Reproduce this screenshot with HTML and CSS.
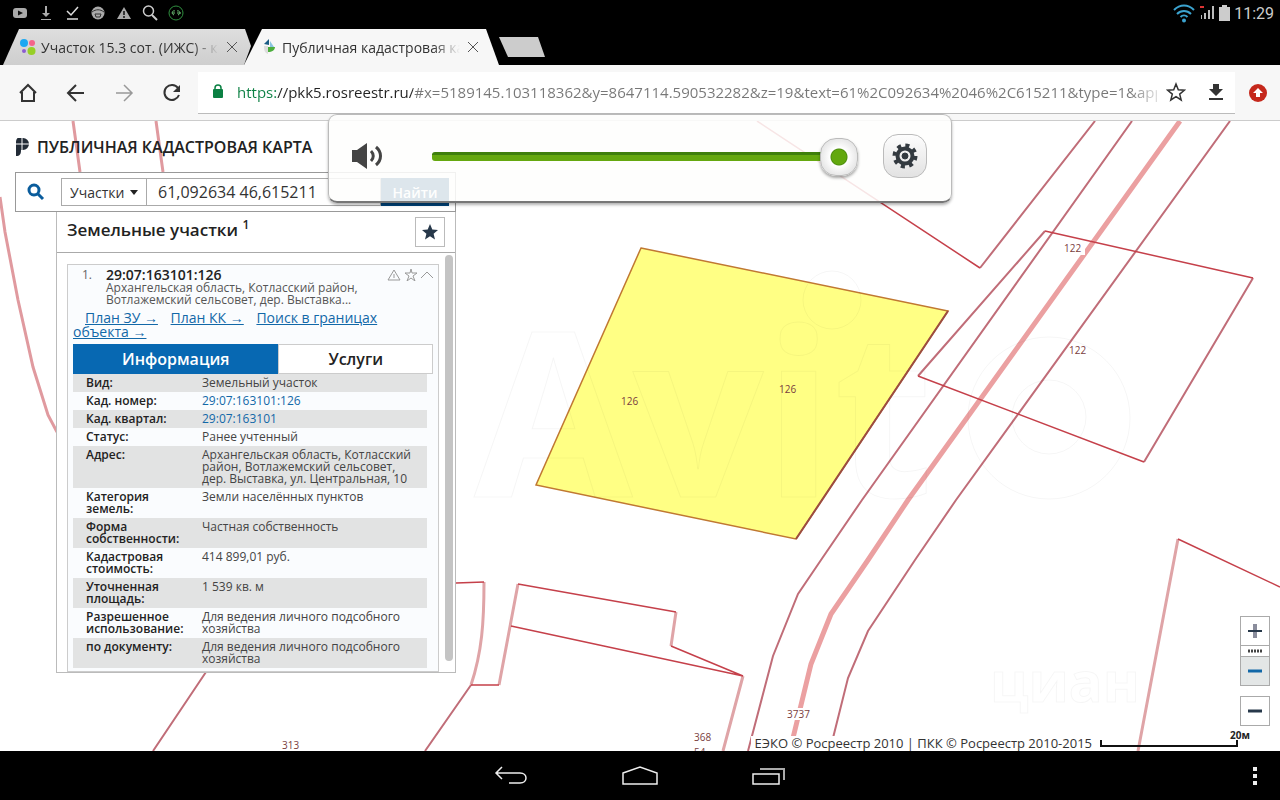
FILE: index.html
```
<!DOCTYPE html>
<html lang="ru">
<head>
    <meta charset="UTF-8">
    <meta name="viewport" content="width=device-width, initial-scale=1.0">
    <title>Публичная кадастровая карта</title>
    <link rel="stylesheet" href="styles.css">
</head>
<body>
<!-- Android status bar -->
<div class="status-bar">
    <div class="status-icons">
        <svg width="16" height="16" viewBox="0 0 16 16"><rect x="1" y="3" width="14" height="10" rx="3" fill="#aaa"/><path d="M6 5.500l5 2.500-5 2.500z" fill="#111"/></svg>
        <svg width="16" height="16" viewBox="0 0 16 16" fill="#aaa"><path d="M7 1h2v7h3l-4 4-4-4h3zM3 14h10v1H3z"/></svg>
        <svg width="16" height="16" viewBox="0 0 16 16" fill="none" stroke="#ddd" stroke-width="1.500"><path d="M3 6l4 4 7-8M3 14h11"/></svg>
        <svg width="16" height="16" viewBox="0 0 16 16"><circle cx="8" cy="8" r="6.500" fill="#aaa"/><path d="M2 7c4-3 8-3 12 0M5 9h6l-1 3H6z" fill="none" stroke="#333"/></svg>
        <svg width="16" height="16" viewBox="0 0 16 16"><path d="M8 2l7 12H1z" fill="#aaa"/><path d="M8 6v4M8 11v2" stroke="#111" stroke-width="1.500"/></svg>
        <svg width="16" height="16" viewBox="0 0 16 16" fill="none" stroke="#ccc" stroke-width="1.500"><circle cx="6.500" cy="6" r="5"/><path d="M10 10l5 5" stroke-width="2"/></svg>
        <svg width="16" height="16" viewBox="0 0 16 16" fill="none" stroke="#2f8f3f"><circle cx="8" cy="8" r="7"/><path d="M7 6c-3-1-4 3-1 4M4 8h3M9 6c3-1 4 3 1 4M9 8h4" stroke="#6cbf74"/></svg>
    </div>
    <div class="status-right">
        <svg width="22" height="20" viewBox="0 0 22 20" fill="none" stroke="#3ba3cf" stroke-width="2"><path d="M1 7c6-6 14-6 20 0M4 11c4-4 10-4 14 0M7.500 14c2-2 5-2 7 0"/><circle cx="11" cy="17.500" r="1" fill="#3ba3cf"/></svg>
        <svg width="16" height="16" viewBox="0 0 16 16" fill="#bbb"><path d="M1 1h4v2H1z" fill="#d33"/><path d="M2 10h1v4H2zM5 8h2v6H5zM9 5h2v9H9zM13 1h2v13h-2z"/></svg>
        <svg width="11" height="16" viewBox="0 0 11 16" fill="#ccc"><path d="M3 0h5v2h3v14H0V2h3z"/></svg>
        <span class="clock">11:29</span>
    </div>
</div>

<!-- Browser tabs -->
<div class="tab-strip">
    <div class="tab tab-first">
        <svg width="18" height="18" viewBox="0 0 18 18"><circle cx="5" cy="5" r="4" fill="#1aa8f2"/><circle cx="13" cy="5" r="3" fill="#f4658a"/><circle cx="5" cy="13" r="2" fill="#8b5cd0"/><circle cx="12.500" cy="13" r="4" fill="#97cf26"/></svg>
        <span class="tab-title">Участок 15.3 сот. (ИЖС) - к</span>
        <button class="tab-close" aria-label="Закрыть"><svg width="12" height="12" viewBox="0 0 12 12" stroke="#555"><path d="M1 1l10 10M11 1L1 11"/></svg></button>
    </div>
    <div class="tab tab-active">
        <svg width="18" height="18" viewBox="0 0 18 18"><path d="M4 6l5-5v6z" fill="#1b5d86"/><path d="M10 3l4 6h-4z" fill="#8bc5df"/><path d="M8 9h7c0 3-3 5-7 5z" fill="#4cae3d"/><path d="M4 8h4v8c-3-1-4-3-4-8z" fill="#ddd"/></svg>
        <span class="tab-title">Публичная кадастровая ка</span>
        <button class="tab-close" aria-label="Закрыть"><svg width="12" height="12" viewBox="0 0 12 12" stroke="#555"><path d="M1 1l10 10M11 1L1 11"/></svg></button>
    </div>
    <button class="tab-new" aria-label="Новая вкладка"></button>
</div>

<!-- Address bar -->
<div class="toolbar">
    <button class="tool" aria-label="Домой"><svg width="20" height="20" viewBox="0 0 20 20" fill="none" stroke="#333" stroke-width="2"><path d="M2 10l8-8 8 8M4 9v9h12V9"/></svg></button>
    <button class="tool" aria-label="Назад"><svg width="20" height="20" viewBox="0 0 20 20" fill="none" stroke="#333" stroke-width="2"><path d="M18 10H3M10 2l-8 8 8 8"/></svg></button>
    <button class="tool" aria-label="Вперёд"><svg width="20" height="20" viewBox="0 0 20 20" fill="none" stroke="#999" stroke-width="1.500"><path d="M2 10h15M10 2l8 8-8 8"/></svg></button>
    <button class="tool" aria-label="Обновить"><svg width="20" height="20" viewBox="0 0 20 20" fill="none" stroke="#333" stroke-width="2"><path d="M16 5a7.500 7.500 0 1 0 1 7"/><path d="M18 2v7h-7z" fill="#333" stroke="none"/></svg></button>
    <div class="omnibox">
        <svg width="12" height="16" viewBox="0 0 12 16"><path d="M3 6V4a3 3 0 0 1 6 0v2" fill="none" stroke="#0b8043" stroke-width="1.500"/><rect x="1" y="5" width="10" height="9" rx="1" fill="#0b8043"/></svg>
        <input class="url" type="text" aria-label="Адрес" value="https://pkk5.rosreestr.ru/#x=5189145.103118362&amp;y=8647114.590532282&amp;z=19&amp;text=61%2C092634%2046%2C615211&amp;type=1&amp;app=search">
        <button class="tool-small" aria-label="В закладки"><svg width="20" height="20" viewBox="0 0 20 20" fill="none" stroke="#333" stroke-width="1.500"><path d="M10 2l2.300 5.800 6 .4-4.600 3.900 1.500 5.900-5.200-3.300L4.800 18l1.500-5.900L1.700 8.200l6-.4z"/></svg></button>
        <button class="tool-small" aria-label="Скачать"><svg width="16" height="20" viewBox="0 0 16 20" fill="#333"><path d="M5 2h6v5h4l-7 7-7-7h4zM1 16h14v2H1z"/></svg></button>
    </div>
    <button class="update" aria-label="Обновление"><svg width="18" height="18" viewBox="0 0 18 18"><circle cx="9" cy="9" r="9" fill="#c5281c"/><path d="M9 4l5 5h-3v4H7V9H4z" fill="#fff"/></svg></button>
</div>

<main class="map">
    <!-- Parcel borders -->
    <svg class="map-canvas" viewBox="0 121 1280 630" preserveAspectRatio="xMidYMid slice">
        <g class="wide">
            <path d="M73 121l7 51M156 121l7 51M0 197L5 232 18 300 33 367 48 415 57 432"/>
        </g>
        <g class="road">
            <path d="M1180 121L908 500 868 560 831 614 811 664 793 738"/>
        </g>
        <g class="edge">
            <path d="M1095 121L980 268M1132 121L862 500 821 560 798 594 773 656 748 751M1230 121L956 500 915 560 868 631 848 678 833 738"/>
            <path d="M1045 231L918 376M1253 278l-109 184"/>
            <path d="M206 672L153 751M471 685L425 751"/>
        </g>
        <g class="soft">
            <path d="M1178 539L1138 751M484 582c0 40-2 70-13 103M518 584L499 685M676 612l-5 34M743 676L723 751"/>
        </g>
        <g class="thin">
            <path d="M757 121L980 268M1045 231l208 47M918 376l226 86M1178 539l102 48"/>
            <path d="M456 583l28-1M471 685l28 0M518 584l158 28M671 646l72 30L511 626"/>
        </g>
        <path class="parcel" d="M641 248L948 311 796 539 536 485z"/>
        <path class="parcel-side" d="M948 311L796 539"/>
        <g class="mark">
            <circle cx="832" cy="300" r="29"/>
            <circle cx="1049" cy="418" r="81"/>
            <circle cx="1049" cy="417" r="37"/>
            <text x="474" y="497" font-size="230">Avit</text>
            <text x="990" y="702" font-size="56">циан</text>
        </g>
        <rect x="1062" y="242" width="23" height="13" fill="#fff"/>
        <rect x="785" y="708" width="28" height="12" fill="#fff"/>
        <g class="labels">
            <text x="621" y="405">126</text>
            <text x="779" y="393">126</text>
            <text x="1064" y="252">122</text>
            <text x="1069" y="354">122</text>
            <text x="787" y="718">3737</text>
            <text x="694" y="741">368</text>
            <text x="694" y="756">54</text>
            <text x="282" y="749">313</text>
        </g>
    </svg>

    <div class="side">
        <h1 class="logo">
            <svg width="16" height="20" viewBox="0 0 16 20"><path d="M3 1h5a6 6 0 0 1 0 12H6c0 4-1 6-5 6V5c0-2 1-4 2-4z" fill="#222b36"/><path d="M0 7h15M7 0v14" stroke="#fff"/></svg>
            Публичная кадастровая карта
        </h1>
        <form class="search">
            <svg class="search-icon" width="18" height="18" viewBox="0 0 18 18" fill="none" stroke="#0a5c9c" stroke-width="3"><circle cx="7" cy="7" r="5"/><path d="M11 11l5 5"/></svg>
            <div class="search-type">
                <select aria-label="Тип объекта"><option>Участки</option></select>
                <svg width="8" height="5" viewBox="0 0 8 5"><path d="M0 0h8L4 5z" fill="#222"/></svg>
            </div>
            <input class="search-text" type="text" aria-label="Поиск" value="61,092634 46,615211">
            <button class="search-button" type="button">Найти</button>
        </form>

        <section class="results">
            <header class="results-head">
                <h2>Земельные участки <sup>1</sup></h2>
                <button class="favorite" aria-label="Избранное"><svg width="16" height="16" viewBox="0 0 16 16" fill="#27384a"><path d="M8 0l2.300 5.500 5.700.5-4.400 3.700L13 15.500 8 12.300 3 15.500l1.400-5.800L0 6l5.700-.5z"/></svg></button>
            </header>
            <div class="results-body">
                <article class="card">
                    <div class="card-top">
                        <span class="number">1.</span>
                        <div class="card-name">
                            <h3>29:07:163101:126</h3>
                            <p>Архангельская область, Котласский район, Вотлажемский сельсовет, дер. Выставка...</p>
                        </div>
                        <svg class="card-tools" width="46" height="12" viewBox="0 0 46 12" fill="none" stroke="#999"><path d="M7 1l6 10H1zM7 5v4M24 0l1 4h5l-4 3 2 5-4-3-4 3 2-5-4-3h5zM34 9l6-6 6 6"/></svg>
                    </div>
                    <div class="card-links">
                        <a href="#">План ЗУ →</a> <a href="#">План КК →</a> <a href="#">Поиск в границах объекта →</a>
                    </div>
                    <div class="card-tabs">
                        <button class="active">Информация</button>
                        <button>Услуги</button>
                    </div>
                    <table class="info">
                        <tr><th>Вид:</th><td>Земельный участок</td></tr>
                        <tr><th>Кад. номер:</th><td><a href="#">29:07:163101:126</a></td></tr>
                        <tr><th>Кад. квартал:</th><td><a href="#">29:07:163101</a></td></tr>
                        <tr><th>Статус:</th><td>Ранее учтенный</td></tr>
                        <tr><th>Адрес:</th><td>Архангельская область, Котласский район, Вотлажемский сельсовет, дер. Выставка, ул. Центральная, 10</td></tr>
                        <tr><th>Категория земель:</th><td>Земли населённых пунктов</td></tr>
                        <tr><th>Форма собственности:</th><td>Частная собственность</td></tr>
                        <tr><th>Кадастровая стоимость:</th><td>414 899,01 руб.</td></tr>
                        <tr><th>Уточненная площадь:</th><td>1 539 кв. м</td></tr>
                        <tr><th>Разрешенное использование:</th><td>Для ведения личного подсобного хозяйства</td></tr>
                        <tr><th>по документу:</th><td>Для ведения личного подсобного хозяйства</td></tr>
                    </table>
                </article>
                <div class="scrollbar"></div>
            </div>
        </section>
    </div>

    <!-- Zoom buttons -->
    <div class="zoom">
        <button aria-label="Приблизить"><svg width="16" height="16" viewBox="0 0 16 16"><path d="M8 1v14" stroke="#8a8d9c" stroke-width="4"/><path d="M1 8h14" stroke="#27384a" stroke-width="2"/></svg></button>
        <div class="zoom-level"><svg width="16" height="4" viewBox="0 0 16 4"><path d="M1 2h14" stroke="#444" stroke-width="3" stroke-dasharray="2 1"/></svg></div>
        <button class="zoom-current" aria-label="Отдалить"><svg width="16" height="4" viewBox="0 0 16 4"><path d="M1 2h14" stroke="#1268a8" stroke-width="3"/></svg></button>
        <button class="zoom-out" aria-label="Весь район"><svg width="16" height="4" viewBox="0 0 16 4"><path d="M1 2h14" stroke="#27384a" stroke-width="3"/></svg></button>
    </div>

    <footer class="attribution">
        <span class="copyright">ЕЭКО © Росреестр 2010 | ПКК © Росреестр 2010-2015</span>
        <div class="scale"><span>20м</span></div>
    </footer>
</main>

<!-- Volume popup -->
<div class="volume">
    <svg class="speaker" width="32" height="28" viewBox="0 0 32 28"><path d="M1 8h5L16 1v26L6 20H1z" fill="#444"/><path d="M20 9c3 3 3 7 0 10M25 5c6 5 6 13 0 18" fill="none" stroke="#444" stroke-width="3"/></svg>
    <input type="range" min="0" max="100" value="100" aria-label="Громкость">
    <button class="settings" aria-label="Настройки"><svg width="26" height="26" viewBox="0 0 26 26" fill="none" stroke="#333a40"><circle cx="13" cy="13" r="10.500" stroke-width="4" stroke-dasharray="4 4.250"/><circle cx="13" cy="13" r="7.500" stroke-width="4"/><circle cx="13" cy="13" r="3" fill="#333a40"/></svg></button>
</div>

<nav class="android-nav">
    <div></div>
    <div class="nav-buttons">
        <button aria-label="Назад"><svg width="34" height="20" viewBox="0 0 34 20" fill="none" stroke="#eee" stroke-width="1.500"><path d="M8 1L2 7l6 6M2 7h24c8 0 8 10 0 10H15"/></svg></button>
        <button aria-label="Домой"><svg width="36" height="20" viewBox="0 0 36 20" fill="none" stroke="#eee" stroke-width="1.500"><path d="M1 7L18 1l17 6v11H1z"/></svg></button>
        <button aria-label="Последние"><svg width="34" height="20" viewBox="0 0 34 20" fill="none" stroke="#eee" stroke-width="1.500"><path d="M1 8h26v10H1z"/><path d="M8 3h24v11" stroke="#aaa" stroke-width="2"/></svg></button>
    </div>
    <button class="more" aria-label="Меню"><svg width="6" height="20" viewBox="0 0 6 20" fill="#eee"><path d="M1 1h4v4H1zM1 8h4v4H1zM1 15h4v4H1z"/></svg></button>
</nav>
</body>
</html>
```
FILE: styles.css
```
/* General */
* {
    box-sizing: border-box;
}
body {
    display: flex;
    flex-direction: column;
    position: relative;
    height: 100vh;
    margin: 0;
    background: #000;
    color: #222;
    font-family: "Open Sans", "Noto Sans", sans-serif;
    font-size: 12px;
    overflow: hidden;
}
h1, h2, h3, p {
    margin: 0;
}
button {
    display: flex;
    align-items: center;
    justify-content: center;
    padding: 0;
    border: 0;
    background: none;
    font-family: inherit;
    cursor: pointer;
}
input, select {
    font-family: inherit;
    border: 0;
    outline: 0;
    background: none;
}
a {
    color: #1268a8;
}
svg {
    flex-shrink: 0;
}

/* Status bar */
.status-bar {
    display: flex;
    align-items: center;
    justify-content: space-between;
    flex: 0 0 26px;
    padding: 0 6px 0 12px;
}
.status-icons {
    display: flex;
    gap: 10px;
}
.status-right {
    display: flex;
    align-items: center;
    gap: 4px;
    color: #ccc;
    font-family: Roboto, sans-serif;
    font-size: 16px;
}

/* Tabs */
.tab-strip {
    display: flex;
    align-items: center;
    flex: 0 0 39px;
    padding-top: 3px;
    padding-left: 3px;
    font-size: 14px;
}
.tab {
    display: flex;
    align-items: center;
    gap: 4px;
    width: 255px;
    height: 36px;
    padding: 0 17px 0 16px;
    background: #f7f7f7;
    clip-path: polygon(18px 0, 242px 0, 100% 100%, 0 100%);
}
.tab-first {
    width: 248px;
    padding-right: 10px;
    background: linear-gradient(#dedede, #cecece);
    clip-path: polygon(16px 0, 242px 0, 248px 17px, 241px 100%, 0 100%);
}
.tab-active {
    margin-left: -7px;
}
.tab-title {
    flex: 1;
    overflow: hidden;
    white-space: nowrap;
    color: #333;
    mask-image: linear-gradient(to right, #000 85%, transparent);
}
.tab-close {
    width: 18px;
    height: 24px;
}
.tab-new {
    width: 46px;
    height: 20px;
    background: #ccc;
    clip-path: polygon(0 0, 39px 0, 100% 100%, 9px 100%);
}

/* Toolbar */
.toolbar {
    display: flex;
    align-items: center;
    flex: 0 0 56px;
    padding-left: 4px;
    background: #f7f7f7;
    border-bottom: 1px solid #ccc;
}
.tool {
    width: 48px;
    height: 40px;
}
.omnibox {
    display: flex;
    align-items: center;
    flex: 1;
    height: 42px;
    margin-left: 2px;
    padding: 0 8px 0 14px;
    background: #fff;
    border-bottom: 1px solid #bbb;
}
.url {
    flex: 1;
    min-width: 0;
    margin: 0 8px 0 13px;
    padding: 0;
    font-family: "Open Sans", sans-serif;
    font-size: 15px;
    color: transparent;
    background: linear-gradient(to right, #0b8043 39px, #222 39px, #222 176px, #777 176px, #777 97%, #ddd);
    background-clip: text;
    -webkit-background-clip: text;
}
.tool-small {
    width: 22px;
    height: 30px;
}
.tool-small + .tool-small {
    margin-left: 18px;
}
.update {
    width: 45px;
    height: 40px;
}

/* Map */
.map {
    position: relative;
    flex: 1;
    min-height: 0;
    background: #fff;
    overflow: hidden;
}
.map-canvas {
    position: absolute;
    inset: 0;
    width: 100%;
    height: 100%;
    fill: none;
}
.wide {
    stroke: #e09a9f;
    stroke-width: 3;
}
.road {
    stroke: #eba0a1;
    stroke-width: 5;
}
.edge {
    stroke: #c06d78;
    stroke-width: 2;
}
.soft {
    stroke: #dfa4a7;
    stroke-width: 3;
}
.thin {
    stroke: #c5404a;
    stroke-width: 1.5;
}
.parcel {
    fill: #ffff84;
    stroke: #c07832;
    stroke-width: 1.5;
}
.parcel-side {
    stroke: #9c4c40;
    stroke-width: 2;
}
.mark {
    stroke: #000;
    stroke-opacity: 0.04;
    font-family: "Open Sans", sans-serif;
    font-weight: bold;
}
.labels {
    fill: #7a4040;
    font-size: 10px;
}

/* Side panel */
.side {
    position: relative;
    display: flex;
    flex-direction: column;
    width: 441px;
    height: 552px;
    margin-left: 15px;
}
.logo {
    display: flex;
    align-items: center;
    gap: 6px;
    flex: 0 0 51px;
    color: #222;
    font-size: 16px;
    font-weight: 600;
    text-transform: uppercase;
}
.search {
    display: flex;
    align-items: center;
    flex: 0 0 40px;
    padding: 0 6px 0 11px;
    border: 1px solid #999;
    background: #fff;
}
.search-icon {
    margin-right: 16px;
}
.search-type {
    display: flex;
    align-items: center;
    width: 86px;
    height: 28px;
    padding: 0 8px;
    border: 1px solid #aaa;
}
.search-type select {
    flex: 1;
    min-width: 0;
    padding: 0;
    appearance: none;
    color: #333;
    font-size: 14px;
}
.search-text {
    flex: 1;
    min-width: 0;
    height: 28px;
    padding: 0 11px;
    border: 1px solid #aaa;
    border-left: 0;
    color: #333;
    font-size: 16px;
}
.search-button {
    width: 68px;
    height: 28px;
    background: #00447a;
    color: #fff;
    font-size: 14px;
    font-weight: 600;
}
.results {
    display: flex;
    flex-direction: column;
    flex: 1;
    min-height: 0;
    margin-left: 41px;
    border: 1px solid #bbb;
    border-top: 0;
    background: #fff;
}
.results-head {
    display: flex;
    align-items: center;
    justify-content: space-between;
    flex: 0 0 41px;
    padding: 0 10px;
    border-bottom: 1px solid #aaa;
}
.results-head h2 {
    padding-bottom: 6px;
    font-size: 17px;
    font-weight: 600;
    line-height: 20px;
}
.results-head sup {
    font-size: 12px;
    line-height: 12px;
}
.favorite {
    width: 30px;
    height: 30px;
    border: 1px solid #bbb;
}
.results-body {
    display: flex;
    gap: 6px;
    flex: 1;
    min-height: 0;
    padding: 0 2px 0 10px;
    overflow: hidden;
}
.scrollbar {
    width: 8px;
    height: 406px;
    margin-top: 2px;
    border-radius: 4px;
    background: #c4c4c4;
}

/* Result card */
.card {
    flex: 1;
    align-self: flex-start;
    margin-top: 11px;
    padding: 3px 5px;
    border: 1px solid #ccc;
    background: #fafcfe;
}
.card-top {
    display: flex;
}
.number {
    width: 33px;
    padding-left: 9px;
    color: #666;
    line-height: 14px;
}
.card-name {
    flex: 1;
    margin-right: -46px;
}
.card-name h3 {
    font-size: 14px;
    font-weight: 600;
    line-height: 14px;
}
.card-name p {
    max-width: 262px;
    color: #555;
    line-height: 12px;
}
.card-tools {
    margin-top: 1px;
}
.card-links {
    padding-top: 5px;
    text-indent: 12px;
    font-size: 14px;
    line-height: 14px;
}
.card-links a {
    margin-right: 9px;
}
.card-tabs {
    display: flex;
    margin: 5px 0 0;
}
.card-tabs button {
    flex: 3;
    height: 30px;
    border: 1px solid #ccc;
    background: #fff;
    color: #222;
    font-size: 16px;
    font-weight: 600;
}
.card-tabs .active {
    flex: 4;
    border-color: #0768b2;
    background: #0768b2;
    color: #fff;
}
.info {
    width: 354px;
    border-collapse: collapse;
    line-height: 12px;
}
.info tr:nth-child(odd) {
    background: #e2e3e3;
}
.info th, .info td {
    padding: 3px 0;
    text-align: left;
    vertical-align: top;
}
.info th {
    width: 129px;
    padding-left: 13px;
    padding-right: 10px;
    font-weight: 600;
}
.info td {
    padding-right: 10px;
    color: #444;
}
.info a {
    text-decoration: none;
}

/* Zoom buttons */
.zoom {
    position: absolute;
    right: 10px;
    bottom: 25px;
    width: 30px;
}
.zoom button {
    width: 30px;
    height: 30px;
    border: 1px solid #aaa;
    background: #fff;
}
.zoom-level {
    display: flex;
    align-items: center;
    justify-content: center;
    height: 10px;
    border: solid #aaa;
    border-width: 0 1px;
    background: #fff;
}
.zoom .zoom-current {
    background: #e3e6e6;
}
.zoom .zoom-out {
    margin-top: 10px;
}

/* Attribution and scale */
.attribution {
    position: absolute;
    right: 30px;
    bottom: 0;
    display: flex;
    align-items: flex-end;
    gap: 8px;
}
.copyright {
    padding-left: 4px;
    background: #fff;
    color: #333;
    font-size: 13px;
    line-height: 15px;
}
.scale {
    width: 138px;
    height: 7px;
    margin-right: 12px;
    margin-bottom: 4px;
    border: solid #111;
    border-width: 0 2px 2px;
    text-align: right;
    font-size: 10px;
    font-weight: bold;
}
.scale span {
    display: block;
    margin-top: -11px;
    margin-right: -14px;
    line-height: 12px;
}

/* Volume popup */
.volume {
    position: absolute;
    top: 114px;
    left: 50%;
    display: flex;
    align-items: center;
    width: 624px;
    height: 89px;
    padding: 0 24px 4px 22px;
    transform: translateX(-50%);
    border: 1px solid #bbb;
    border-bottom: 2px solid #777;
    border-radius: 9px;
    background: rgba(254, 254, 253, 0.87);
    box-shadow: 0 2px 3px rgba(0, 0, 0, 0.3);
}
.speaker {
    margin-right: 49px;
}
.volume input {
    flex: 1;
    height: 40px;
    margin: 0;
    appearance: none;
}
.volume input::-webkit-slider-runnable-track {
    height: 9px;
    border-top: 3px solid #3f7f0c;
    border-radius: 3px;
    background: #65a80f;
}
.volume input::-webkit-slider-thumb {
    appearance: none;
    width: 38px;
    height: 38px;
    margin-top: -17px;
    border: 1px solid #bbb;
    border-radius: 16px;
    background: radial-gradient(circle, #62a80e 7px, #4f8f10 8px, #fff 9px, #e8e8e8 18px);
    box-shadow: 0 2px 3px rgba(0, 0, 0, 0.35);
}
.settings {
    width: 44px;
    height: 44px;
    margin-left: 25px;
    border: 1px solid #bbb;
    border-radius: 15px;
    background: linear-gradient(#fdfdfd, #e2e2e2);
}

/* Android navigation */
.android-nav {
    display: grid;
    grid-template-columns: 1fr auto 1fr;
    align-items: center;
    flex: 0 0 49px;
    padding: 0 22px;
}
.nav-buttons {
    display: flex;
    gap: 94px;
}
.more {
    justify-self: end;
}
```
